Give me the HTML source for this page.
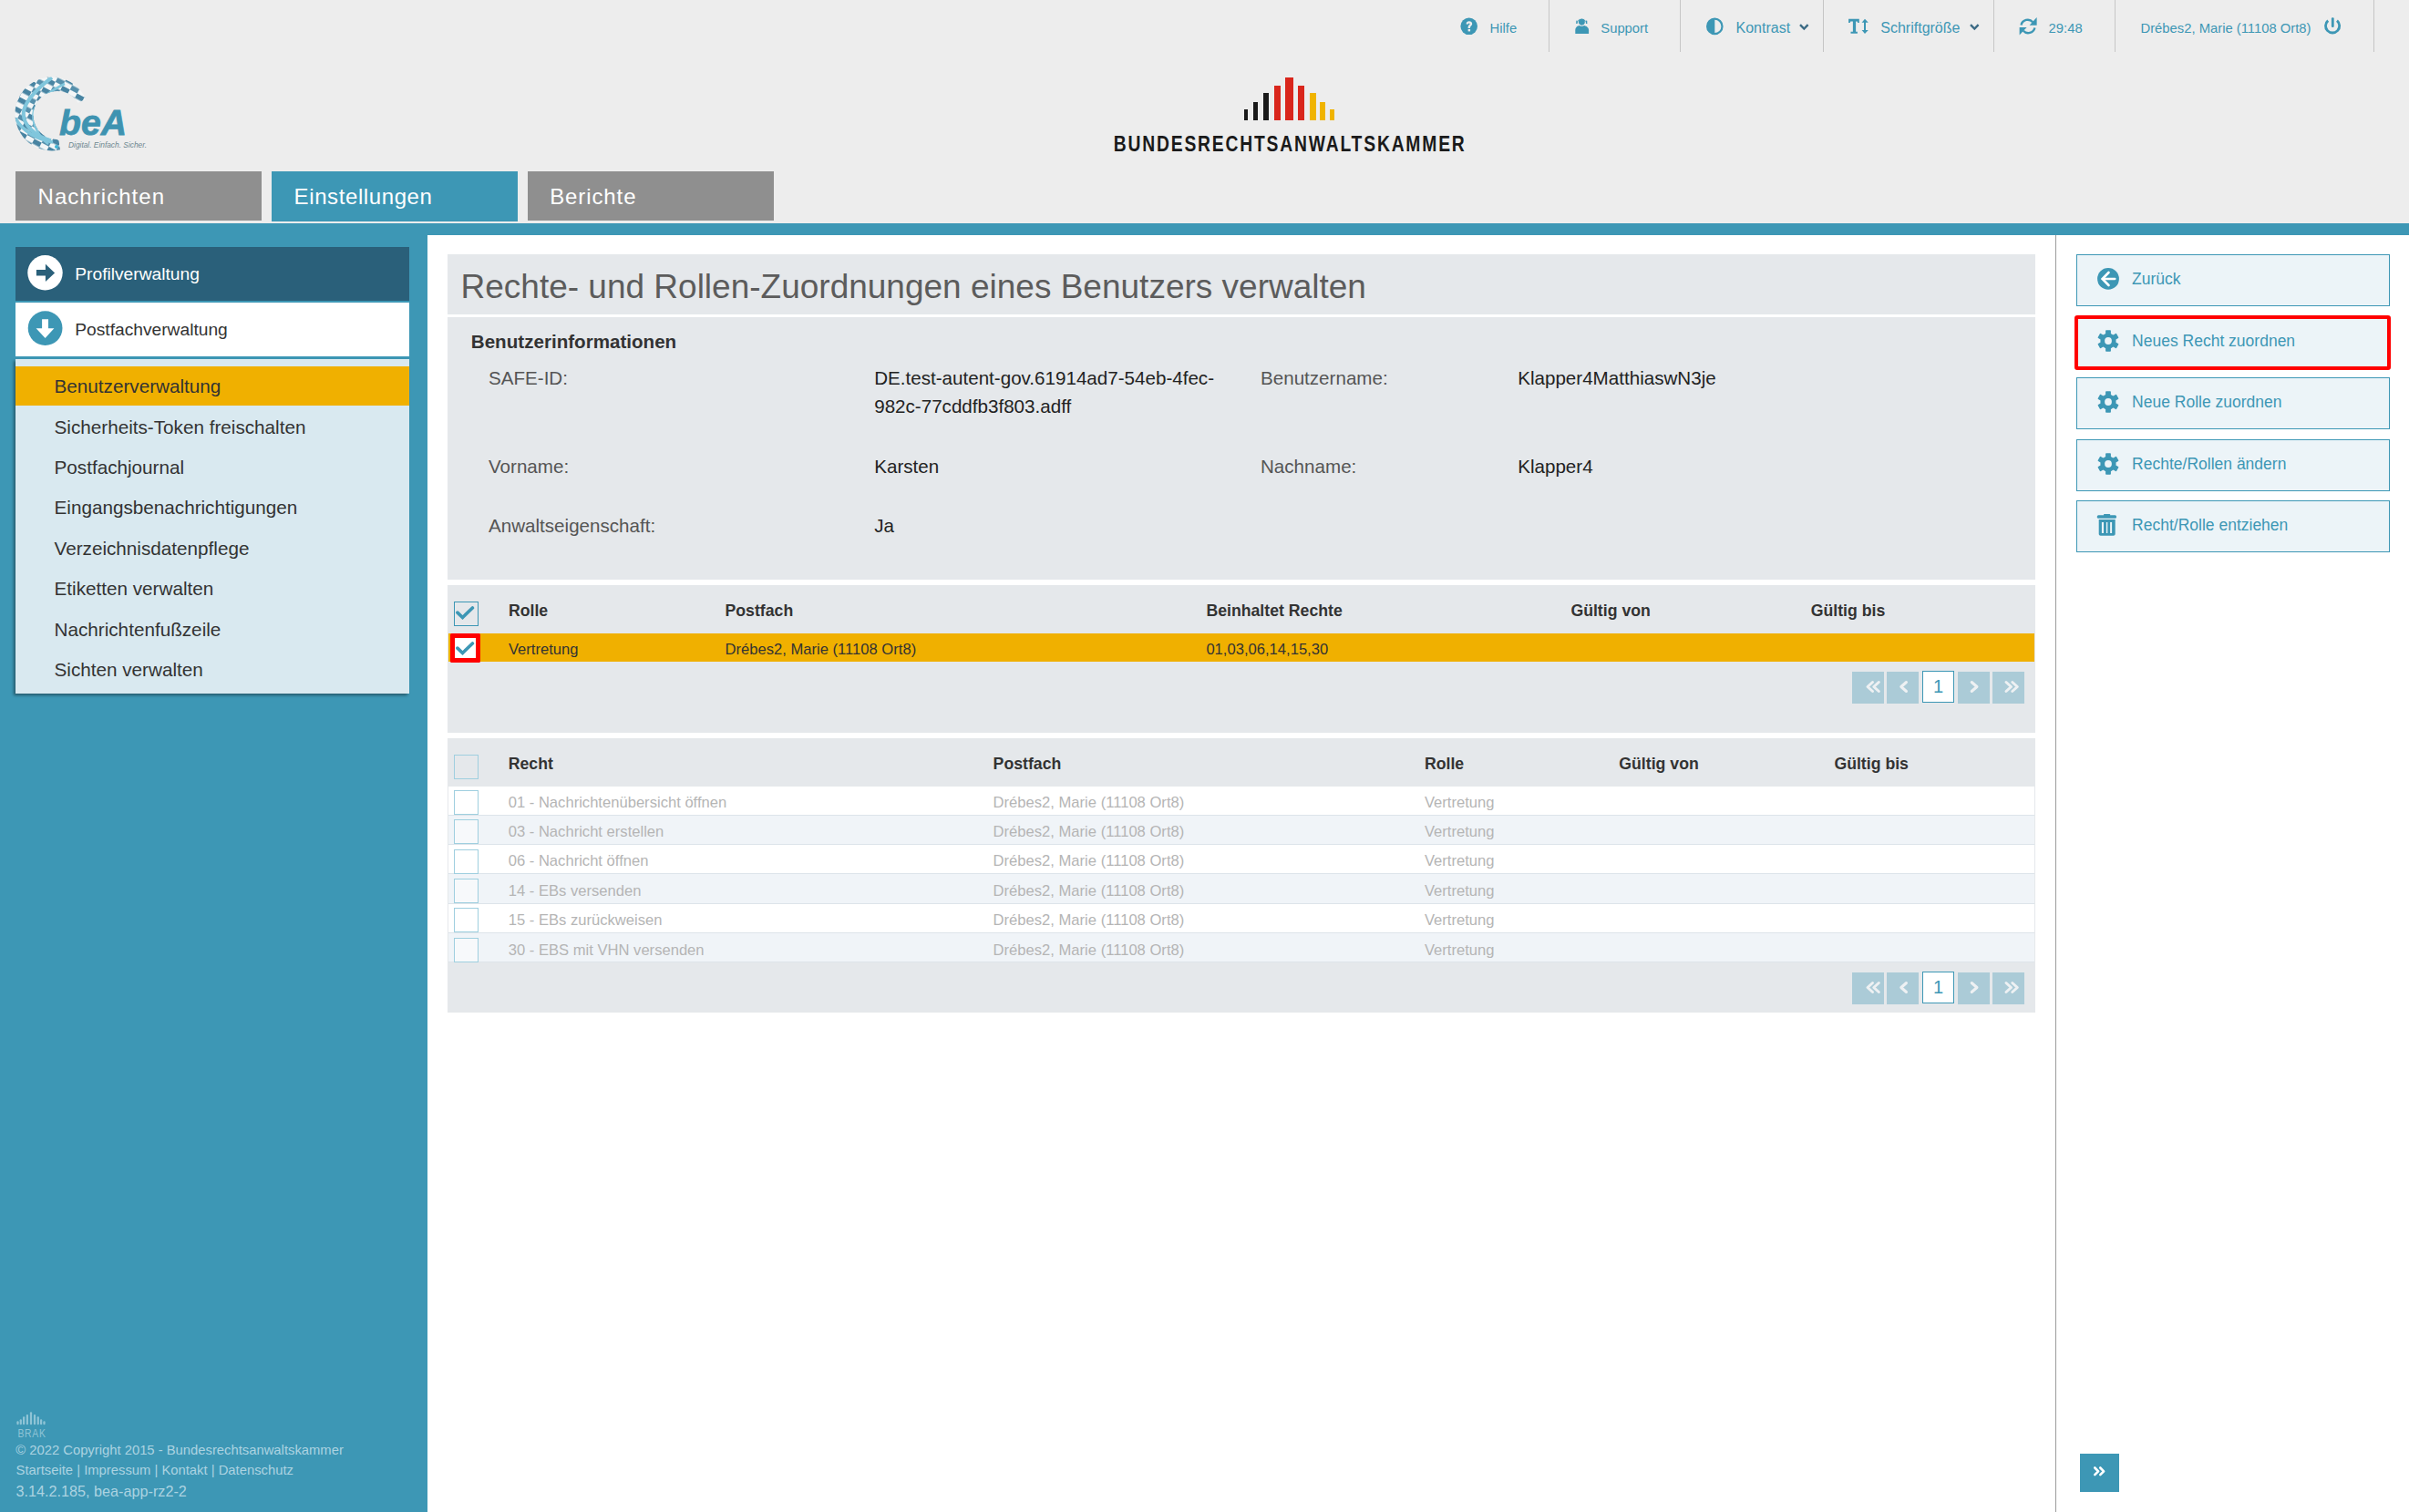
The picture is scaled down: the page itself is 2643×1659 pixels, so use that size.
<!DOCTYPE html>
<html><head><meta charset="utf-8">
<style>
*{margin:0;padding:0;box-sizing:border-box}
html,body{width:2643px;height:1659px;overflow:hidden}
body{background:#ededed;font-family:"Liberation Sans",sans-serif;position:relative;color:#333}
.a{position:absolute}
.t{position:absolute;white-space:nowrap;line-height:1}
</style></head><body>
<div class="a" style="left:1699px;top:0;width:1px;height:57px;background:#c6c6c6"></div>
<div class="a" style="left:1843px;top:0;width:1px;height:57px;background:#c6c6c6"></div>
<div class="a" style="left:2000px;top:0;width:1px;height:57px;background:#c6c6c6"></div>
<div class="a" style="left:2187px;top:0;width:1px;height:57px;background:#c6c6c6"></div>
<div class="a" style="left:2320px;top:0;width:1px;height:57px;background:#c6c6c6"></div>
<div class="a" style="left:2604px;top:0;width:1px;height:57px;background:#c6c6c6"></div>
<div class="t" style="left:1634.6px;top:24.20px;font-size:14.8px;color:#3d97b5;">Hilfe</div>
<div class="t" style="left:1756.3px;top:24.20px;font-size:14.8px;color:#3d97b5;">Support</div>
<div class="t" style="left:1904.5px;top:23.20px;font-size:16px;color:#3d97b5;">Kontrast</div>
<div class="t" style="left:2063.3px;top:23.20px;font-size:16px;color:#3d97b5;">Schriftgröße</div>
<div class="t" style="left:2247.6px;top:24.10px;font-size:14.8px;color:#3d97b5;">29:48</div>
<div class="t" style="left:2348.5px;top:24.10px;font-size:14.8px;color:#3d97b5;">Drébes2, Marie (11108 Ort8)</div>
<svg class="a" style="left:1600px;top:17px" width="24" height="24" viewBox="0 0 24 24">
<circle cx="11.7" cy="11.8" r="9.3" fill="#3d97b5"/>
<path d="M8.6 9.6 C8.6 7.4 10.1 6.3 11.9 6.3 C13.8 6.3 15.2 7.5 15.2 9.2 C15.2 11.2 13.0 11.5 13.0 13.2 L13.0 13.9 L10.6 13.9 L10.6 12.9 C10.6 10.6 12.6 10.4 12.6 9.3 C12.6 8.7 12.2 8.4 11.8 8.4 C11.2 8.4 10.9 8.8 10.9 9.6 Z" fill="#ededed"/>
<rect x="10.6" y="15.0" width="2.5" height="2.4" fill="#ededed"/>
</svg>
<svg class="a" style="left:1725px;top:16px" width="22" height="24" viewBox="0 0 22 24">
<path d="M3.3 21.1 L3.3 17.2 C3.3 14.2 5.5 12.1 8.5 12.1 L12.1 12.1 C15.1 12.1 18.1 14.2 18.1 17.2 L18.1 21.1 Z" fill="#3d97b5"/>
<circle cx="10.3" cy="8.1" r="4.1" fill="#3d97b5" stroke="#ededed" stroke-width="1.1"/>
<path d="M4.8 9.6 A5.7 5.7 0 0 1 15.8 9.6" fill="none" stroke="#3d97b5" stroke-width="0.9"/>
<rect x="4.3" y="6.4" width="1.3" height="3.6" rx="0.5" fill="#3d97b5"/><rect x="15" y="6.4" width="1.3" height="3.6" rx="0.5" fill="#3d97b5"/>
</svg>
<svg class="a" style="left:1870px;top:18px" width="22" height="22" viewBox="0 0 22 22">
<circle cx="11.3" cy="10.9" r="8.2" fill="none" stroke="#3d97b5" stroke-width="2.2"/>
<path d="M11.3 2.7 A8.2 8.2 0 0 0 11.3 19.1 Z" fill="#3d97b5"/>
</svg>
<svg class="a" style="left:1973px;top:25px" width="13" height="10" viewBox="0 0 13 10">
<path d="M2 2.2 L6.3 6.5 L10.6 2.2" fill="none" stroke="#3b6a84" stroke-width="2.4"/>
</svg>
<svg class="a" style="left:2160px;top:25px" width="13" height="10" viewBox="0 0 13 10">
<path d="M2 2.2 L6.3 6.5 L10.6 2.2" fill="none" stroke="#3b6a84" stroke-width="2.4"/>
</svg>
<svg class="a" style="left:2027px;top:19px" width="24" height="20" viewBox="0 0 24 20">
<path d="M1.1 1.7 L12.8 1.7 L12.8 6.1 L11.2 6.1 L10.6 4.6 L9.1 4.6 L9.1 15.8 L10.9 15.8 L10.9 17.8 L3.5 17.8 L3.5 15.8 L5.9 15.8 L5.9 4.6 L3.3 4.6 L2.7 6.1 L1.1 6.1 Z" fill="#3d97b5"/>
<path d="M19 1.7 L22.8 5.7 L20 5.7 L20 14 L22.8 14 L19 18 L15.6 14 L18 14 L18 5.7 L15.6 5.7 Z" fill="#3d97b5"/>
</svg>
<svg class="a" style="left:2214px;top:18px" width="22" height="22" viewBox="0 0 22 22">
<path d="M3.5 9.5 A7.3 7.3 0 0 1 16.2 6.3" fill="none" stroke="#3d97b5" stroke-width="2.4"/>
<path d="M20.6 1 L20.6 9.8 L12.6 9.8 Z" fill="#3d97b5"/>
<path d="M18.4 12.5 A7.3 7.3 0 0 1 5.8 15.7" fill="none" stroke="#3d97b5" stroke-width="2.4"/>
<path d="M1.6 12.0 L9.6 12.0 L1.6 20.4 Z" fill="#3d97b5"/>
</svg>
<svg class="a" style="left:2548px;top:18px" width="22" height="22" viewBox="0 0 22 22">
<path d="M6.2 4.6 A7.6 7.6 0 1 0 16.0 4.6" fill="none" stroke="#3d97b5" stroke-width="2.8"/>
<rect x="9.9" y="1.3" width="2.8" height="10.6" rx="1.2" fill="#3d97b5"/>
</svg>
<svg class="a" style="left:0;top:70px" width="180" height="110" viewBox="0 0 180 110">
<defs>
<pattern id="chk" patternUnits="userSpaceOnUse" width="18" height="11" patternTransform="rotate(28)">
<rect x="0" y="0" width="18" height="11" fill="#f3f6f7"/>
<rect x="0" y="0" width="9" height="5.5" fill="#4884a2"/><rect x="9" y="5.5" width="9" height="5.5" fill="#5690ac"/>
</pattern>
<clipPath id="ring"><path clip-rule="evenodd" d="M57 14.5 A40.5 40.5 0 1 0 57.01 14.5 Z M63 30 A26.5 26.5 0 1 1 62.99 30 Z"/></clipPath>
<clipPath id="wedge"><path d="M60 55 L100 36 L100 -10 L-10 -10 L-10 120 L70 120 Z"/></clipPath>
</defs>
<g clip-path="url(#wedge)"><g clip-path="url(#ring)">
<rect x="0" y="0" width="120" height="110" fill="url(#chk)"/>
<g fill="none" stroke="#80c6dc">
<path d="M57 15 C44 24 28 40 26 52 C24 66 38 80 56 84" stroke-width="4"/>
<path d="M71 22 C54 30 40 42 37 52 C34 64 42 80 53 88" stroke-width="2.6"/>
<path d="M17 60 C24 72 36 82 58 86" stroke-width="3.6"/>
</g>
</g></g>
<circle cx="62" cy="91" r="2" fill="#3fb3d5"/>
<text x="65" y="78" font-family="Liberation Sans" font-weight="bold" font-style="italic" font-size="38" fill="#3e93b1" stroke="#3e93b1" stroke-width="0.8" textLength="74" lengthAdjust="spacingAndGlyphs">beA</text>
<text x="75" y="92" font-family="Liberation Sans" font-style="italic" font-size="8.5" fill="#6d8790" textLength="86" lengthAdjust="spacingAndGlyphs">Digital. Einfach. Sicher.</text>
</svg>
<div class="a" style="left:1365.3px;top:120.2px;width:4.2000000000000455px;height:11.700000000000003px;background:#1a1a1a"></div>
<div class="a" style="left:1374.9px;top:111.5px;width:5.5px;height:20.400000000000006px;background:#1a1a1a"></div>
<div class="a" style="left:1385.7px;top:102.4px;width:6.599999999999909px;height:29.5px;background:#1a1a1a"></div>
<div class="a" style="left:1397.5px;top:93.5px;width:7.2999999999999545px;height:38.400000000000006px;background:#d9261c"></div>
<div class="a" style="left:1410px;top:85px;width:8.799999999999955px;height:46.900000000000006px;background:#d9261c"></div>
<div class="a" style="left:1424.4px;top:93.5px;width:6.899999999999864px;height:38.400000000000006px;background:#d9261c"></div>
<div class="a" style="left:1436.6px;top:102.4px;width:7.0px;height:29.5px;background:#f0b400"></div>
<div class="a" style="left:1448.4px;top:111.5px;width:6.099999999999909px;height:20.400000000000006px;background:#f0b400"></div>
<div class="a" style="left:1459.2px;top:120.2px;width:4.899999999999864px;height:11.700000000000003px;background:#f0b400"></div>
<svg class="a" style="left:1215px;top:140px" width="400" height="30" viewBox="0 0 400 30"><text transform="scale(0.84,1)" x="8.1" y="25.9" font-family="Liberation Sans" font-weight="bold" font-size="23" fill="#1a1a1a" textLength="458.3" lengthAdjust="spacing">BUNDESRECHTSANWALTSKAMMER</text></svg>
<div class="a" style="left:17px;top:188px;width:270px;height:54px;background:#8f8f8f"></div>
<div class="a" style="left:298px;top:188px;width:270px;height:55px;background:#3d97b5"></div>
<div class="a" style="left:579px;top:188px;width:270px;height:54px;background:#8f8f8f"></div>
<div class="t" style="left:41.5px;top:203.80px;font-size:24px;color:#fff;letter-spacing:1.05px">Nachrichten</div>
<div class="t" style="left:322.6px;top:203.80px;font-size:24px;color:#fff;letter-spacing:0.6px">Einstellungen</div>
<div class="t" style="left:603.2px;top:203.80px;font-size:24px;color:#fff;letter-spacing:0.9px">Berichte</div>
<div class="a" style="left:0;top:245px;width:2643px;height:13px;background:#3d97b5"></div>
<div class="a" style="left:0;top:258px;width:469px;height:1401px;background:#3d97b5"></div>
<div class="a" style="left:469px;top:258px;width:2174px;height:1401px;background:#fff"></div>
<div class="a" style="left:2255px;top:258px;width:1px;height:1401px;background:#9c9c9c"></div>
<div class="a" style="left:17px;top:271px;width:432px;height:59px;background:#2a607a"></div>
<div class="a" style="left:17px;top:332px;width:432px;height:59px;background:#fff"></div>
<div class="a" style="left:17px;top:394px;width:432px;height:367px;background:#d9e9f0;box-shadow:-2px 2px 3px rgba(0,0,0,0.4)"></div>
<div class="a" style="left:17px;top:402px;width:432px;height:43px;background:#f0b000"></div>
<svg class="a" style="left:29px;top:279px" width="41" height="41" viewBox="0 0 41 41">
<circle cx="20.5" cy="20.3" r="19.2" fill="#fff"/>
<path d="M10.9 17.1 L20.9 17.1 L20.9 10.8 L31.1 20.4 L20.9 30 L20.9 23.5 L10.9 23.5 Z" fill="#2a607a"/>
</svg>
<svg class="a" style="left:29px;top:340px" width="41" height="41" viewBox="0 0 41 41">
<circle cx="20.6" cy="20.1" r="18.9" fill="#3d97b5"/>
<path d="M17.1 10.3 L24 10.3 L24 20.3 L30.4 20.3 L20.6 31 L10.6 20.3 L17.1 20.3 Z" fill="#fff"/>
</svg>
<div class="t" style="left:82.3px;top:291.40px;font-size:19.2px;color:#fff;">Profilverwaltung</div>
<div class="t" style="left:82.3px;top:351.90px;font-size:19.2px;color:#333;">Postfachverwaltung</div>
<div class="t" style="left:59.5px;top:414.30px;font-size:20.7px;color:#333;">Benutzerverwaltung</div>
<div class="t" style="left:59.5px;top:458.67px;font-size:20.7px;color:#333;">Sicherheits-Token freischalten</div>
<div class="t" style="left:59.5px;top:503.04px;font-size:20.7px;color:#333;">Postfachjournal</div>
<div class="t" style="left:59.5px;top:547.41px;font-size:20.7px;color:#333;">Eingangsbenachrichtigungen</div>
<div class="t" style="left:59.5px;top:591.78px;font-size:20.7px;color:#333;">Verzeichnisdatenpflege</div>
<div class="t" style="left:59.5px;top:636.15px;font-size:20.7px;color:#333;">Etiketten verwalten</div>
<div class="t" style="left:59.5px;top:680.52px;font-size:20.7px;color:#333;">Nachrichtenfußzeile</div>
<div class="t" style="left:59.5px;top:724.89px;font-size:20.7px;color:#333;">Sichten verwalten</div>
<svg class="a" style="left:17px;top:1546px" width="36" height="34" viewBox="0 0 36 34">
<g fill="#8fc4d6"><rect x="1.4" y="13.3" width="2.2" height="3.9" rx="1"/><rect x="4.7" y="11.3" width="2.2" height="5.9" rx="1"/><rect x="8.0" y="8.3" width="2.2" height="8.9" rx="1"/><rect x="11.8" y="5.9" width="2.2" height="11.3" rx="1"/><rect x="15.9" y="3.2" width="2.2" height="14.0" rx="1"/><rect x="19.9" y="5.9" width="2.2" height="11.3" rx="1"/><rect x="23.7" y="8.3" width="2.2" height="8.9" rx="1"/><rect x="27.0" y="11.3" width="2.2" height="5.9" rx="1"/><rect x="30.4" y="13.3" width="2.2" height="3.9" rx="1"/></g>
<text transform="translate(2.5,31.2) scale(0.8,1)" x="0" y="0" font-family="Liberation Sans" font-size="13" fill="#8fc4d6" textLength="38" lengthAdjust="spacing">BRAK</text>
</svg>
<div class="t" style="left:17.2px;top:1584.30px;font-size:14.8px;color:#acd3e1;">© 2022 Copyright 2015 - Bundesrechtsanwaltskammer</div>
<div class="t" style="left:17.6px;top:1606.20px;font-size:14.8px;color:#acd3e1;">Startseite | Impressum | Kontakt | Datenschutz</div>
<div class="t" style="left:17.6px;top:1627.60px;font-size:16.2px;color:#acd3e1;">3.14.2.185, bea-app-rz2-2</div>
<div class="a" style="left:491px;top:279px;width:1742px;height:66px;background:#e5e8eb"></div>
<div class="a" style="left:491px;top:348px;width:1742px;height:288px;background:#e5e8eb"></div>
<div class="a" style="left:491px;top:642px;width:1742px;height:162px;background:#e5e8eb"></div>
<div class="a" style="left:491px;top:810px;width:1742px;height:301px;background:#e5e8eb"></div>
<div class="t" style="left:505.5px;top:295.50px;font-size:37px;color:#5c5c5c;">Rechte- und Rollen-Zuordnungen eines Benutzers verwalten</div>
<div class="t" style="left:516.8px;top:364.80px;font-size:20.6px;color:#333;font-weight:bold;">Benutzerinformationen</div>
<div class="t" style="left:536px;top:405.30px;font-size:20.6px;color:#555;">SAFE-ID:</div>
<div class="t" style="left:536px;top:502.20px;font-size:20.6px;color:#555;">Vorname:</div>
<div class="t" style="left:536px;top:567.20px;font-size:20.6px;color:#555;">Anwaltseigenschaft:</div>
<div class="t" style="left:1383px;top:405.30px;font-size:20.6px;color:#555;">Benutzername:</div>
<div class="t" style="left:1383px;top:502.20px;font-size:20.6px;color:#555;">Nachname:</div>
<div class="t" style="left:959.2px;top:405.30px;font-size:20.6px;color:#222;">DE.test-autent-gov.61914ad7-54eb-4fec-</div>
<div class="t" style="left:959.2px;top:435.60px;font-size:20.6px;color:#222;">982c-77cddfb3f803.adff</div>
<div class="t" style="left:959.2px;top:502.20px;font-size:20.6px;color:#222;">Karsten</div>
<div class="t" style="left:959.2px;top:567.20px;font-size:20.6px;color:#222;">Ja</div>
<div class="t" style="left:1665.2px;top:405.30px;font-size:20.6px;color:#222;">Klapper4MatthiaswN3je</div>
<div class="t" style="left:1665.2px;top:502.20px;font-size:20.6px;color:#222;">Klapper4</div>
<div class="a" style="left:498px;top:660px;width:27px;height:27px;border:1px solid #3d97b5"></div>
<svg class="a" style="left:498px;top:660px" width="27" height="27" viewBox="0 0 27 27"><path d="M3.9 12.1 L9.5 17.6 L20.4 7.0" fill="none" stroke="#3d97b5" stroke-width="3.6" stroke-linecap="round" stroke-linejoin="miter"/></svg>
<div class="t" style="left:557.9px;top:662.30px;font-size:17.7px;color:#333;font-weight:bold;">Rolle</div>
<div class="t" style="left:795.5px;top:662.30px;font-size:17.7px;color:#333;font-weight:bold;">Postfach</div>
<div class="t" style="left:1323.4px;top:662.30px;font-size:17.7px;color:#333;font-weight:bold;">Beinhaltet Rechte</div>
<div class="t" style="left:1723.4px;top:662.30px;font-size:17.7px;color:#333;font-weight:bold;">Gültig von</div>
<div class="t" style="left:1986.7px;top:662.30px;font-size:17.7px;color:#333;font-weight:bold;">Gültig bis</div>
<div class="a" style="left:492px;top:695px;width:1740px;height:31px;background:#f0b000"></div>
<div class="a" style="left:494px;top:695px;width:33px;height:32px;background:#fff;border:5px solid #ff0000;border-radius:1.5px"></div>
<svg class="a" style="left:498px;top:699px" width="27" height="27" viewBox="0 0 27 27"><path d="M3.9 12.1 L9.5 17.6 L20.4 7.0" fill="none" stroke="#3d97b5" stroke-width="3.6" stroke-linecap="round" stroke-linejoin="miter"/></svg>
<div class="t" style="left:557.9px;top:704.60px;font-size:16.6px;color:#333;">Vertretung</div>
<div class="t" style="left:795.5px;top:704.60px;font-size:16.6px;color:#333;">Drébes2, Marie (11108 Ort8)</div>
<div class="t" style="left:1323.4px;top:704.60px;font-size:16.6px;color:#333;">01,03,06,14,15,30</div>
<div class="a" style="left:2032px;top:737px;width:35px;height:35px;background:#abcbd7"></div>
<div class="a" style="left:2070px;top:737px;width:35px;height:35px;background:#abcbd7"></div>
<div class="a" style="left:2109px;top:736px;width:35px;height:35px;background:#fff;border:1px solid #3d97b5"></div>
<div class="t" style="left:2121px;top:742.5px;font-size:20px;color:#3d97b5">1</div>
<div class="a" style="left:2148px;top:737px;width:35px;height:35px;background:#abcbd7"></div>
<div class="a" style="left:2186px;top:737px;width:35px;height:35px;background:#abcbd7"></div>
<svg class="a" style="left:2032px;top:737px" width="190" height="35" viewBox="0 0 190 35">
<g fill="none" stroke="#eef1f3" stroke-width="3" stroke-linecap="round" stroke-linejoin="round">
<path d="M22.5 11.5 L17 16.5 L22.5 21.5"/><path d="M29.3 11.5 L23.8 16.5 L29.3 21.5"/>
<path d="M59.5 11.5 L53.8 16.5 L59.5 21.5"/>
<path d="M131.2 11.5 L137 16.5 L131.2 21.5"/>
<path d="M169 11.5 L174.5 16.5 L169 21.5"/><path d="M175.8 11.5 L181.3 16.5 L175.8 21.5"/>
</g></svg>
<div class="a" style="left:498px;top:828px;width:27px;height:27px;border:1px solid #9fcfdf"></div>
<div class="t" style="left:557.7px;top:830.30px;font-size:17.7px;color:#333;font-weight:bold;">Recht</div>
<div class="t" style="left:1089.6px;top:830.30px;font-size:17.7px;color:#333;font-weight:bold;">Postfach</div>
<div class="t" style="left:1562.9px;top:830.30px;font-size:17.7px;color:#333;font-weight:bold;">Rolle</div>
<div class="t" style="left:1776.3px;top:830.30px;font-size:17.7px;color:#333;font-weight:bold;">Gültig von</div>
<div class="t" style="left:2012.4px;top:830.30px;font-size:17.7px;color:#333;font-weight:bold;">Gültig bis</div>
<div class="a" style="left:492px;top:862.5px;width:1740px;height:32.3px;background:#fff;border-bottom:1px solid #dde4ea"></div>
<div class="a" style="left:498px;top:867.0px;width:27px;height:27px;border:1px solid #9fcfdf;background:#fff"></div>
<div class="t" style="left:557.7px;top:873.00px;font-size:16.6px;color:#b5b5b5;">01 - Nachrichtenübersicht öffnen</div>
<div class="t" style="left:1089.6px;top:873.00px;font-size:16.6px;color:#b5b5b5;">Drébes2, Marie (11108 Ort8)</div>
<div class="t" style="left:1562.9px;top:873.00px;font-size:16.6px;color:#b5b5b5;">Vertretung</div>
<div class="a" style="left:492px;top:894.8px;width:1740px;height:32.3px;background:#f0f4f8;border-bottom:1px solid #dde4ea"></div>
<div class="a" style="left:498px;top:899.3px;width:27px;height:27px;border:1px solid #9fcfdf;background:#f7f9fb"></div>
<div class="t" style="left:557.7px;top:905.00px;font-size:16.6px;color:#b5b5b5;">03 - Nachricht erstellen</div>
<div class="t" style="left:1089.6px;top:905.00px;font-size:16.6px;color:#b5b5b5;">Drébes2, Marie (11108 Ort8)</div>
<div class="t" style="left:1562.9px;top:905.00px;font-size:16.6px;color:#b5b5b5;">Vertretung</div>
<div class="a" style="left:492px;top:927.1px;width:1740px;height:32.3px;background:#fff;border-bottom:1px solid #dde4ea"></div>
<div class="a" style="left:498px;top:931.6px;width:27px;height:27px;border:1px solid #9fcfdf;background:#fff"></div>
<div class="t" style="left:557.7px;top:937.00px;font-size:16.6px;color:#b5b5b5;">06 - Nachricht öffnen</div>
<div class="t" style="left:1089.6px;top:937.00px;font-size:16.6px;color:#b5b5b5;">Drébes2, Marie (11108 Ort8)</div>
<div class="t" style="left:1562.9px;top:937.00px;font-size:16.6px;color:#b5b5b5;">Vertretung</div>
<div class="a" style="left:492px;top:959.4px;width:1740px;height:32.3px;background:#f0f4f8;border-bottom:1px solid #dde4ea"></div>
<div class="a" style="left:498px;top:963.9px;width:27px;height:27px;border:1px solid #9fcfdf;background:#f7f9fb"></div>
<div class="t" style="left:557.7px;top:970.00px;font-size:16.6px;color:#b5b5b5;">14 - EBs versenden</div>
<div class="t" style="left:1089.6px;top:970.00px;font-size:16.6px;color:#b5b5b5;">Drébes2, Marie (11108 Ort8)</div>
<div class="t" style="left:1562.9px;top:970.00px;font-size:16.6px;color:#b5b5b5;">Vertretung</div>
<div class="a" style="left:492px;top:991.7px;width:1740px;height:32.3px;background:#fff;border-bottom:1px solid #dde4ea"></div>
<div class="a" style="left:498px;top:996.2px;width:27px;height:27px;border:1px solid #9fcfdf;background:#fff"></div>
<div class="t" style="left:557.7px;top:1002.00px;font-size:16.6px;color:#b5b5b5;">15 - EBs zurückweisen</div>
<div class="t" style="left:1089.6px;top:1002.00px;font-size:16.6px;color:#b5b5b5;">Drébes2, Marie (11108 Ort8)</div>
<div class="t" style="left:1562.9px;top:1002.00px;font-size:16.6px;color:#b5b5b5;">Vertretung</div>
<div class="a" style="left:492px;top:1024.0px;width:1740px;height:32.3px;background:#f0f4f8;border-bottom:1px solid #dde4ea"></div>
<div class="a" style="left:498px;top:1028.5px;width:27px;height:27px;border:1px solid #9fcfdf;background:#f7f9fb"></div>
<div class="t" style="left:557.7px;top:1035.00px;font-size:16.6px;color:#b5b5b5;">30 - EBS mit VHN versenden</div>
<div class="t" style="left:1089.6px;top:1035.00px;font-size:16.6px;color:#b5b5b5;">Drébes2, Marie (11108 Ort8)</div>
<div class="t" style="left:1562.9px;top:1035.00px;font-size:16.6px;color:#b5b5b5;">Vertretung</div>
<div class="a" style="left:2032px;top:1067px;width:35px;height:35px;background:#abcbd7"></div>
<div class="a" style="left:2070px;top:1067px;width:35px;height:35px;background:#abcbd7"></div>
<div class="a" style="left:2109px;top:1066px;width:35px;height:35px;background:#fff;border:1px solid #3d97b5"></div>
<div class="t" style="left:2121px;top:1072.5px;font-size:20px;color:#3d97b5">1</div>
<div class="a" style="left:2148px;top:1067px;width:35px;height:35px;background:#abcbd7"></div>
<div class="a" style="left:2186px;top:1067px;width:35px;height:35px;background:#abcbd7"></div>
<svg class="a" style="left:2032px;top:1067px" width="190" height="35" viewBox="0 0 190 35">
<g fill="none" stroke="#eef1f3" stroke-width="3" stroke-linecap="round" stroke-linejoin="round">
<path d="M22.5 11.5 L17 16.5 L22.5 21.5"/><path d="M29.3 11.5 L23.8 16.5 L29.3 21.5"/>
<path d="M59.5 11.5 L53.8 16.5 L59.5 21.5"/>
<path d="M131.2 11.5 L137 16.5 L131.2 21.5"/>
<path d="M169 11.5 L174.5 16.5 L169 21.5"/><path d="M175.8 11.5 L181.3 16.5 L175.8 21.5"/>
</g></svg>
<div class="a" style="left:2278px;top:279.0px;width:344px;height:57px;border:1px solid #3d97b5;background:#ecf4f8"></div>
<div class="t" style="left:2339.1px;top:298.40px;font-size:17.5px;color:#3d97b5;">Zurück</div>
<div class="a" style="left:2278px;top:346.5px;width:344px;height:57px;border:1px solid #3d97b5;background:#ecf4f8"></div>
<div class="t" style="left:2339.1px;top:365.90px;font-size:17.5px;color:#3d97b5;">Neues Recht zuordnen</div>
<div class="a" style="left:2278px;top:414.0px;width:344px;height:57px;border:1px solid #3d97b5;background:#ecf4f8"></div>
<div class="t" style="left:2339.1px;top:433.40px;font-size:17.5px;color:#3d97b5;">Neue Rolle zuordnen</div>
<div class="a" style="left:2278px;top:481.5px;width:344px;height:57px;border:1px solid #3d97b5;background:#ecf4f8"></div>
<div class="t" style="left:2339.1px;top:500.90px;font-size:17.5px;color:#3d97b5;">Rechte/Rollen ändern</div>
<div class="a" style="left:2278px;top:549.0px;width:344px;height:57px;border:1px solid #3d97b5;background:#ecf4f8"></div>
<div class="t" style="left:2339.1px;top:568.40px;font-size:17.5px;color:#3d97b5;">Recht/Rolle entziehen</div>
<svg class="a" style="left:2299px;top:292px" width="28" height="28" viewBox="0 0 28 28">
<circle cx="14" cy="13.9" r="11.9" fill="#3d97b5"/>
<path d="M14.5 7 L7.6 14 L14.5 21" fill="none" stroke="#fff" stroke-width="2.6" stroke-linecap="round"/>
<path d="M8.5 14 L21.4 14" stroke="#fff" stroke-width="2.3" stroke-linecap="round"/>
</svg>
<svg class="a" style="left:2298.8px;top:359.8px" width="28" height="28" viewBox="-14 -14 28 28"><g fill="#3d97b5"><circle cx="0" cy="0" r="8.6"/><rect x="-2.9" y="-11.8" width="5.8" height="6" rx="0.8" transform="rotate(0)"/><rect x="-2.9" y="-11.8" width="5.8" height="6" rx="0.8" transform="rotate(60)"/><rect x="-2.9" y="-11.8" width="5.8" height="6" rx="0.8" transform="rotate(120)"/><rect x="-2.9" y="-11.8" width="5.8" height="6" rx="0.8" transform="rotate(180)"/><rect x="-2.9" y="-11.8" width="5.8" height="6" rx="0.8" transform="rotate(240)"/><rect x="-2.9" y="-11.8" width="5.8" height="6" rx="0.8" transform="rotate(300)"/></g><circle cx="0" cy="0" r="3.9" fill="#ecf4f8"/></svg>
<svg class="a" style="left:2298.8px;top:427.3px" width="28" height="28" viewBox="-14 -14 28 28"><g fill="#3d97b5"><circle cx="0" cy="0" r="8.6"/><rect x="-2.9" y="-11.8" width="5.8" height="6" rx="0.8" transform="rotate(0)"/><rect x="-2.9" y="-11.8" width="5.8" height="6" rx="0.8" transform="rotate(60)"/><rect x="-2.9" y="-11.8" width="5.8" height="6" rx="0.8" transform="rotate(120)"/><rect x="-2.9" y="-11.8" width="5.8" height="6" rx="0.8" transform="rotate(180)"/><rect x="-2.9" y="-11.8" width="5.8" height="6" rx="0.8" transform="rotate(240)"/><rect x="-2.9" y="-11.8" width="5.8" height="6" rx="0.8" transform="rotate(300)"/></g><circle cx="0" cy="0" r="3.9" fill="#ecf4f8"/></svg>
<svg class="a" style="left:2298.8px;top:494.8px" width="28" height="28" viewBox="-14 -14 28 28"><g fill="#3d97b5"><circle cx="0" cy="0" r="8.6"/><rect x="-2.9" y="-11.8" width="5.8" height="6" rx="0.8" transform="rotate(0)"/><rect x="-2.9" y="-11.8" width="5.8" height="6" rx="0.8" transform="rotate(60)"/><rect x="-2.9" y="-11.8" width="5.8" height="6" rx="0.8" transform="rotate(120)"/><rect x="-2.9" y="-11.8" width="5.8" height="6" rx="0.8" transform="rotate(180)"/><rect x="-2.9" y="-11.8" width="5.8" height="6" rx="0.8" transform="rotate(240)"/><rect x="-2.9" y="-11.8" width="5.8" height="6" rx="0.8" transform="rotate(300)"/></g><circle cx="0" cy="0" r="3.9" fill="#ecf4f8"/></svg>
<svg class="a" style="left:2298px;top:561px" width="28" height="30" viewBox="0 0 28 30">
<g fill="#3d97b5">
<rect x="2.8" y="4.3" width="21.2" height="3.4" rx="1.5"/>
<rect x="10" y="2.9" width="7.1" height="2.4" rx="0.6"/>
<path d="M4.7 9 L22.7 9 L22.7 24.7 C22.7 25.9 21.9 26.7 20.7 26.7 L6.7 26.7 C5.5 26.7 4.7 25.9 4.7 24.7 Z"/>
</g>
<g fill="#ecf4f8"><rect x="7.9" y="12" width="2.1" height="12"/><rect x="12.9" y="12" width="1.4" height="12"/><rect x="17.1" y="12" width="2.0" height="12"/></g>
</svg>
<div class="a" style="left:2276px;top:346px;width:347px;height:60px;border:4.6px solid #ff0000;border-radius:3px"></div>
<div class="a" style="left:2282px;top:1595px;width:43px;height:42px;background:#3d97b5"></div>
<svg class="a" style="left:2282px;top:1595px" width="43" height="42" viewBox="0 0 43 42">
<g fill="none" stroke="#fff" stroke-width="2.6" stroke-linecap="round" stroke-linejoin="round"><path d="M16.3 15.5 L20.1 19.3 L16.3 23.1"/><path d="M22.3 15.5 L26.1 19.3 L22.3 23.1"/></g>
</svg>
</body></html>
